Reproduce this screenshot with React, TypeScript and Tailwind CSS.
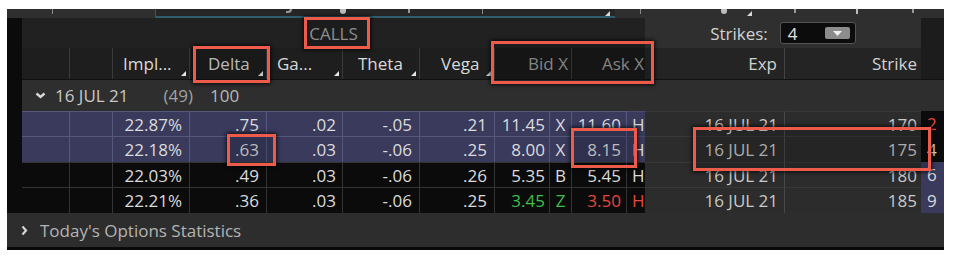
import React from "react";

const GRID =
  "grid grid-cols-[48px_43px_77px_77px_76px_77px_75px_55px_22px_55px_18px_140px_136px_23px]";

type Quote = {
  iv: string;
  delta: string;
  gamma: string;
  theta: string;
  vega: string;
  bid: string;
  bidEx: string;
  ask: string;
  askEx: string;
  exp: string;
  strike: string;
  put: string;
  itm: boolean;
  bidColor?: string;
  askColor?: string;
  putColor?: string;
};

const ROWS: Quote[] = [
  { iv: "22.87%", delta: ".75", gamma: ".02", theta: "-.05", vega: ".21", bid: "11.45", bidEx: "X", ask: "11.60", askEx: "H", exp: "16 JUL 21", strike: "170", put: "2", itm: true, putColor: "text-[#e5473f]" },
  { iv: "22.18%", delta: ".63", gamma: ".03", theta: "-.06", vega: ".25", bid: "8.00", bidEx: "X", ask: "8.15", askEx: "H", exp: "16 JUL 21", strike: "175", put: "4", itm: true },
  { iv: "22.03%", delta: ".49", gamma: ".03", theta: "-.06", vega: ".26", bid: "5.35", bidEx: "B", ask: "5.45", askEx: "H", exp: "16 JUL 21", strike: "180", put: "6", itm: false },
  { iv: "22.21%", delta: ".36", gamma: ".03", theta: "-.06", vega: ".25", bid: "3.45", bidEx: "Z", ask: "3.50", askEx: "H", exp: "16 JUL 21", strike: "185", put: "9", itm: false, bidColor: "text-[#3fbf4a]", askColor: "text-[#e5473f]" },
];

const HEADERS: { label: string; pad: string }[] = [
  { label: "Impl...", pad: "pl-[10px]" },
  { label: "Delta", pad: "pl-[18px]" },
  { label: "Ga...", pad: "pl-[10px]" },
  { label: "Theta", pad: "pl-[15px]" },
  { label: "Vega", pad: "pl-[21px]" },
];

function SortMark() {
  return (
    <svg width="5" height="5" viewBox="0 0 5 5" className="ml-auto mr-[3px] self-end mb-[3px]">
      <polygon points="5,0 5,5 0,5" fill="#e6e6e6" />
    </svg>
  );
}

function Box({ className }: { className: string }) {
  return (
    <div
      className={`absolute border-[3px] border-[#ee5b4b] shadow-[0_0_4px_1px_rgba(0,0,0,0.75)] bg-black/15 ${className}`}
    />
  );
}

export default function App() {
  return (
    <div className="relative w-[954px] h-[267px] bg-white font-['Open_Sans',sans-serif] text-[17px] leading-none overflow-hidden">
      <div className="pt-[9px] pl-[7px] w-[944px]">
        {/* clipped toolbar above */}
        <div className="h-[9px] bg-[#2f2f2f] flex">
          <div className="w-[148px] flex">
            <div className="ml-[45px] w-px h-[5px] bg-[#8a8a8a]" />
          </div>
          <div className="w-[460px] bg-[#262626] border-l border-b-2 border-[#2d5d6e] flex items-start">
            <div className="ml-[130px] w-[6px] h-[4px] border-b-2 border-r-2 border-[#9a9a9a] rounded-br" />
            <div className="ml-[48px] w-[6px] h-[5px] bg-[#bdbdbd] rounded-b" />
            <div className="ml-[60px] w-[4px] h-[4px] border-r-2 border-[#9a9a9a]" />
            <div className="ml-[72px] w-px h-[5px] bg-[#8a8a8a]" />
            <svg width="5" height="5" viewBox="0 0 5 5" className="ml-auto mr-[5px] mt-[2px]">
              <polygon points="5,0 5,5 0,5" fill="#d8d8d8" />
            </svg>
          </div>
          <div className="flex-1 flex items-start">
            <div className="ml-[25px] w-px h-[5px] bg-[#8a8a8a]" />
            <div className="ml-[80px] w-[6px] h-[5px] bg-[#bdbdbd] rounded-b" />
            <svg width="5" height="5" viewBox="0 0 5 5" className="ml-[20px] mt-[2px]">
              <polygon points="5,0 5,5 0,5" fill="#d8d8d8" />
            </svg>
            <div className="ml-[40px] w-[4px] h-[4px] border-r-2 border-[#9a9a9a]" />
            <div className="ml-[60px] w-[2px] h-[5px] bg-[#bdbdbd]" />
            <div className="ml-[52px] w-[4px] h-[4px] border-r-2 border-[#9a9a9a]" />
          </div>
        </div>

        <div className="flex">
          <div className="w-[15px] bg-[#0b0b0b]" />
          <div className="w-[922px]">
            {/* CALLS row */}
            <div className="grid grid-cols-[623px_276px_23px] h-[30px]">
              <div className="bg-[#212121] flex items-center justify-center text-[#a6a6a6]">CALLS</div>
              <div className="bg-[#2f2f2f] flex items-center justify-center gap-[12px]">
                <span className="text-[#d2d2d2]">Strikes:</span>
                <div className="w-[76px] h-[22px] bg-[#0c0c0c] border border-[#555] rounded-[3px] flex items-center">
                  <span className="pl-[7px] text-[#e2e2e2]">4</span>
                  <div className="ml-auto mr-[5px] w-[25px] h-[12px] bg-[#8c8c8c] rounded-[2px] flex items-center justify-center">
                    <svg width="9" height="5" viewBox="0 0 9 5">
                      <polygon points="0,0 9,0 4.5,5" fill="#f2f2f2" />
                    </svg>
                  </div>
                </div>
              </div>
              <div className="bg-[#1c1c1c]" />
            </div>

            {/* column headers */}
            <div className={`${GRID} h-[32px] bg-[#1e1e1e] border-b border-[#111] text-[#dadada]`}>
              <div className="border-r border-[#3a3a3a]" />
              <div className="border-r border-[#3a3a3a]" />
              {HEADERS.map((h) => (
                <div key={h.label} className={`flex items-center border-r border-[#3a3a3a] ${h.pad}`}>
                  <span>{h.label}</span>
                  <SortMark />
                </div>
              ))}
              <div className="col-span-2 bg-[#191919] border-r border-[#3a3a3a] flex items-center justify-end pr-[3px] text-[#9c9c9c]">
                Bid X
              </div>
              <div className="col-span-2 bg-[#191919] flex items-center justify-end pr-[1px] text-[#9c9c9c]">
                Ask X
              </div>
              <div className="bg-[#242424] border-r border-[#444] flex items-center justify-end pr-[7px] text-[#d2d2d2]">
                Exp
              </div>
              <div className="bg-[#242424] flex items-center justify-end pr-[4px] text-[#d2d2d2]">
                Strike
              </div>
              <div className="bg-[#1c1c1c]" />
            </div>

            {/* expiration group */}
            <div className="h-[31px] bg-[#2e2e2e] flex items-center text-[#c8c8c8]">
              <svg width="11" height="7" viewBox="0 0 11 7" className="ml-[13px]">
                <polyline points="1.5,1.5 5.5,5 9.5,1.5" fill="none" stroke="#d8d8d8" strokeWidth="2.4" />
              </svg>
              <span className="ml-[9px]">16 JUL 21</span>
              <span className="ml-[35px] text-[#a2a2a2]">(49)</span>
              <span className="ml-[17px] text-[#b8b8b8]">100</span>
            </div>

            {/* strikes */}
            {ROWS.map((r, i) => {
              const bg = r.itm ? "bg-[#393a5c]" : "bg-[#0b0b0b]";
              const sep = r.itm ? "border-[#55577c]" : "border-[#343434]";
              const line = r.itm ? "border-[#4a4b6e]" : "border-[#2e2e2e]";
              const h = i % 2 === 0 ? "h-[25px]" : "h-[26px]";
              const cell = `flex items-center border-r ${sep}`;
              return (
                <div key={r.strike} className={`${GRID} ${h} text-[#dcdcdc]`}>
                  <div className={`${bg} ${cell} border-t ${line}`} />
                  <div className={`${bg} ${cell} border-t ${line}`} />
                  <div className={`${bg} ${cell} border-t ${line} justify-end pr-[7px]`}>{r.iv}</div>
                  <div className={`${bg} ${cell} border-t ${line} justify-end pr-[7px]`}>{r.delta}</div>
                  <div className={`${bg} ${cell} border-t ${line} justify-end pr-[6px]`}>{r.gamma}</div>
                  <div className={`${bg} ${cell} border-t ${line} justify-end pr-[7px]`}>{r.theta}</div>
                  <div className={`${bg} ${cell} border-t ${line} justify-end pr-[7px]`}>{r.vega}</div>
                  <div className={`${bg} ${cell} border-t ${line} justify-end pr-[4px] ${r.bidColor ?? ""}`}>{r.bid}</div>
                  <div className={`${bg} ${cell} border-t ${line} justify-center ${r.bidColor ?? ""}`}>{r.bidEx}</div>
                  <div className={`${bg} ${cell} border-t ${line} justify-end pr-[5px] ${r.askColor ?? ""}`}>{r.ask}</div>
                  <div className={`${bg} flex items-center border-t ${line} pl-[5px] ${r.askColor ?? ""}`}>{r.askEx}</div>
                  <div className="bg-[#2c2c2c] flex items-center justify-end pr-[6px] border-r border-[#484848] border-t border-t-[#383838] text-[#c9c9c9]">
                    {r.exp}
                  </div>
                  <div className="bg-[#2c2c2c] flex items-center justify-end pr-[4px] border-t border-[#383838] text-[#c9c9c9]">
                    {r.strike}
                  </div>
                  <div className={`${r.itm ? "bg-[#0b0b0b]" : "bg-[#393a5c]"} flex items-center pl-[6px] ${r.putColor ?? ""}`}>
                    {r.put}
                  </div>
                </div>
              );
            })}
          </div>
        </div>

        {/* footer */}
        <div className="h-[34px] bg-[#2d2d2d] flex items-center text-[#b4b4b4]">
          <svg width="7" height="11" viewBox="0 0 7 11" className="ml-[14px]">
            <polyline points="1.5,1.5 5,5.5 1.5,9.5" fill="none" stroke="#d4d4d4" strokeWidth="2.2" />
          </svg>
          <span className="ml-[12px]">Today's Options Statistics</span>
        </div>
        <div className="h-[3px] bg-[#0a0a0a]" />
      </div>

      {/* annotation boxes */}
      <Box className="left-[304px] top-[17px] w-[66px] h-[32px]" />
      <Box className="left-[193px] top-[46px] w-[77px] h-[37px]" />
      <Box className="left-[491px] top-[41px] w-[163px] h-[43px]" />
      <Box className="left-[227px] top-[134px] w-[49px] h-[32px]" />
      <Box className="left-[571px] top-[128px] w-[66px] h-[40px]" />
      <Box className="left-[693px] top-[127px] w-[238px] h-[44px]" />
    </div>
  );
}
